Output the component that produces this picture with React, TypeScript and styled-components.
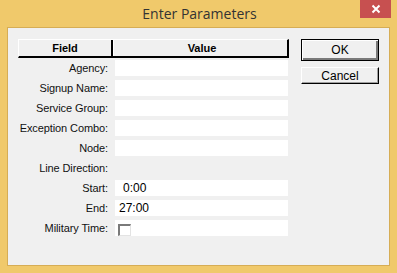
import React from "react";
import styled, { createGlobalStyle } from "styled-components";

const GlobalStyle = createGlobalStyle`
  html, body {
    margin: 0;
    padding: 0;
    background: #f0c96b;
  }
  body {
    font-family: "Liberation Sans", Arial, sans-serif;
    font-size: 11px;
    color: #000;
  }
`;

interface Row {
  label: string;
  value?: string;
  input?: boolean;
  checkbox?: boolean;
  indent?: boolean;
}

const rows: Row[] = [
  { label: "Agency:", input: true },
  { label: "Signup Name:", input: true },
  { label: "Service Group:", input: true },
  { label: "Exception Combo:", input: true },
  { label: "Node:", input: true },
  { label: "Line Direction:" },
  { label: "Start:", input: true, value: "0:00", indent: true },
  { label: "End:", input: true, value: "27:00" },
  { label: "Military Time:", input: true, checkbox: true },
];

const App = () => {
  return (
    <Window>
      <GlobalStyle />
      <TitleBar>
        <span />
        <Title>Enter Parameters</Title>
        <CloseButton>
          <svg width="10" height="10" viewBox="0 0 10 10">
            <path d="M1.5 1.5 L8.5 8.5 M8.5 1.5 L1.5 8.5" stroke="#fff" strokeWidth="2" />
          </svg>
        </CloseButton>
      </TitleBar>
      <Client>
        <Form>
          <Header>
            <HeaderCell $first>Field</HeaderCell>
            <HeaderCell>Value</HeaderCell>
          </Header>
          <Rows>
            {rows.map((r) => (
              <FieldRow key={r.label}>
                <Label>{r.label}</Label>
                {r.input && (
                  <Input $indent={r.indent}>
                    {r.checkbox ? <Checkbox /> : r.value}
                  </Input>
                )}
              </FieldRow>
            ))}
          </Rows>
        </Form>
        <Buttons>
          <Button $default>OK</Button>
          <Button>Cancel</Button>
        </Buttons>
      </Client>
    </Window>
  );
};

export default App;

const Window = styled.div`
  width: 397px;
  height: 273px;
  display: flex;
  flex-direction: column;
  background: #f0c96b;
  box-sizing: border-box;
`;

const TitleBar = styled.div`
  height: 27px;
  display: grid;
  grid-template-columns: 1fr auto 1fr;
  flex-shrink: 0;
`;

const Title = styled.div`
  font-family: "Open Sans", "Noto Sans", sans-serif;
  font-size: 14px;
  color: #333;
  line-height: 27px;
  padding-left: 2px;
`;

const CloseButton = styled.div`
  justify-self: end;
  width: 31px;
  height: 18px;
  margin-right: 6px;
  background: #c75050;
  display: flex;
  align-items: center;
  justify-content: center;
`;

const Client = styled.div`
  flex: 1;
  margin: 0 7px 7px 7px;
  border: 1px solid #d6ad55;
  background: #f0f0f0;
  padding: 11px 0 0 10px;
  display: flex;
  align-items: flex-start;
`;

const Form = styled.div`
  width: 271px;
`;

const Header = styled.div`
  display: grid;
  grid-template-columns: 94px 177px;
  height: 19px;
  box-sizing: border-box;
  border-top: 1px solid #fff;
  border-left: 1px solid #fff;
  border-bottom: 2px solid #000;
  border-right: 2px solid #000;
`;

const HeaderCell = styled.div<{ $first?: boolean }>`
  font-weight: bold;
  text-align: center;
  line-height: 16px;
  box-sizing: border-box;
  border-right: ${(p) => (p.$first ? "2px solid #000" : "none")};
  border-left: ${(p) => (p.$first ? "none" : "1px solid #fff")};
`;

const Rows = styled.div`
  display: flex;
  flex-direction: column;
  gap: 4px;
  margin-top: 2px;
`;

const FieldRow = styled.div`
  display: grid;
  grid-template-columns: 97px 173px;
  height: 16px;
  align-items: center;
`;

const Label = styled.div`
  text-align: right;
  padding-right: 7px;
  white-space: nowrap;
  color: #111;
  letter-spacing: -0.1px;
`;

const Input = styled.div<{ $indent?: boolean }>`
  height: 16px;
  background: #fff;
  box-sizing: border-box;
  padding-left: ${(p) => (p.$indent ? "8px" : "4px")};
  font-size: 12px;
  line-height: 16px;
  display: flex;
  align-items: center;
`;

const Checkbox = styled.div`
  width: 13px;
  height: 12px;
  margin-left: -1px;
  margin-top: 3px;
  box-sizing: border-box;
  background: #fff;
  border-top: 2px solid #7a7a7a;
  border-left: 2px solid #7a7a7a;
  border-bottom: 1px solid #e3e3e3;
  border-right: 1px solid #e3e3e3;
`;

const Buttons = styled.div`
  margin-left: 12px;
  display: flex;
  flex-direction: column;
  gap: 6px;
`;

const Button = styled.div<{ $default?: boolean }>`
  width: 78px;
  height: ${(p) => (p.$default ? "22px" : "17px")};
  box-sizing: border-box;
  background: #f0f0f0;
  display: flex;
  align-items: center;
  justify-content: center;
  font-size: 12px;
  border-top: 1px solid ${(p) => (p.$default ? "#000" : "#fff")};
  border-left: 1px solid ${(p) => (p.$default ? "#000" : "#fff")};
  border-bottom: 1px solid #000;
  border-right: 1px solid #000;
  box-shadow: ${(p) =>
    p.$default
      ? "inset 1px 1px 0 #fff, inset -2px -2px 0 #7a7a7a"
      : "inset -1px -1px 0 #a0a0a0"};
`;
